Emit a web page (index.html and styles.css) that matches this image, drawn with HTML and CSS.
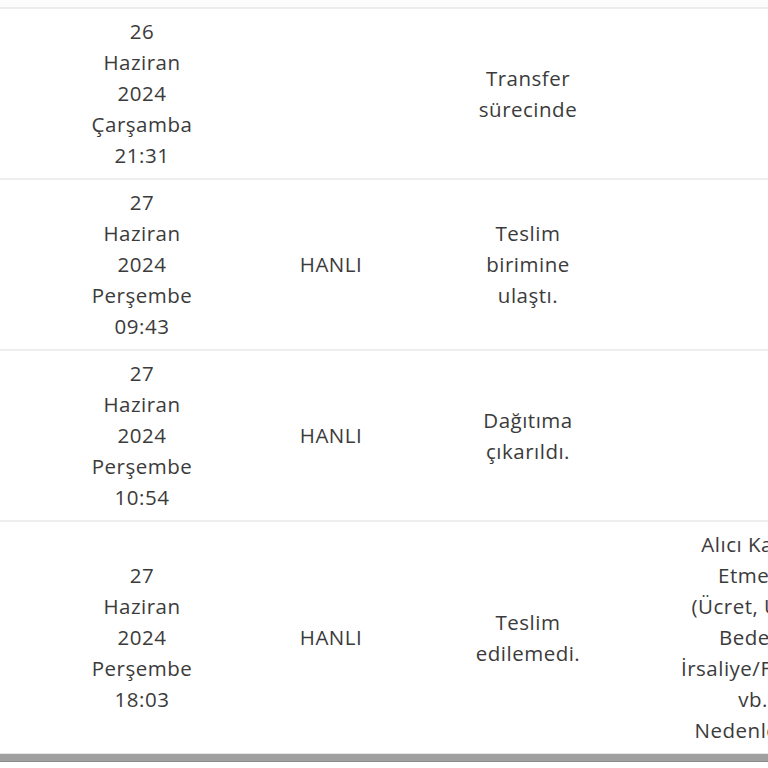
FILE: index.html
```html
<!DOCTYPE html>
<html lang="tr">
<head>
<meta charset="utf-8">
<link rel="stylesheet" href="styles.css">
</head>
<body>
<div class="page">
  <div class="top-strip"></div>
  <table class="track">
    <colgroup>
      <col class="c-date"><col class="c-loc"><col class="c-status"><col class="c-note">
    </colgroup>
    <tbody>
      <tr>
        <td><div class="words">26 Haziran 2024 Çarşamba 21:31</div></td>
        <td></td>
        <td><div class="words">Transfer sürecinde</div></td>
        <td></td>
      </tr>
      <tr>
        <td><div class="words">27 Haziran 2024 Perşembe 09:43</div></td>
        <td>HANLI</td>
        <td><div class="words">Teslim birimine ulaştı.</div></td>
        <td></td>
      </tr>
      <tr>
        <td><div class="words">27 Haziran 2024 Perşembe 10:54</div></td>
        <td>HANLI</td>
        <td><div class="words">Dağıtıma çıkarıldı.</div></td>
        <td></td>
      </tr>
      <tr>
        <td><div class="words">27 Haziran 2024 Perşembe 18:03</div></td>
        <td>HANLI</td>
        <td><div class="words">Teslim edilemedi.</div></td>
        <td><div class="note">Alıcı Kabul<br>Etmedi<br>(Ücret, Ürün<br>Bedeli,<br>İrsaliye/Fatura<br>vb.<br>Nedenlerle)</div></td>
      </tr>
    </tbody>
  </table>
  <div class="bottom-bar"></div>
</div>
</body>
</html>
```

FILE: styles.css
```css
html, body {
  margin: 0;
  padding: 0;
  background: #ffffff;
  overflow: hidden;
}

.page {
  width: 828px;
  font-family: "Open Sans", "Liberation Sans", sans-serif;
  font-size: 20.5px;
  letter-spacing: 0.5px;
  line-height: 31px;
  color: #3b3b3b;
}

.top-strip {
  height: 7px;
  background: #fcfcfc;
}

.track {
  width: 828px;
  table-layout: fixed;
  border-collapse: collapse;
  border-top: 2px solid #ececec;
}

.c-date { width: 284px; }
.c-loc { width: 94px; }
.c-status { width: 300px; }
.c-note { width: 150px; }

.track td {
  padding: 7px 0;
  text-align: center;
  vertical-align: middle;
  border-bottom: 2px solid #eeeeee;
}

.track tr:last-child td {
  border-bottom: none;
}

.words {
  width: min-content;
  margin: 0 auto;
}

.note {
  white-space: nowrap;
  text-align: center;
}

.bottom-bar {
  height: 7px;
  background: #a0a0a0;
  border-bottom: 1px solid #8a8a8a;
  border-top: 1px solid #e6e6e6;
}
```
